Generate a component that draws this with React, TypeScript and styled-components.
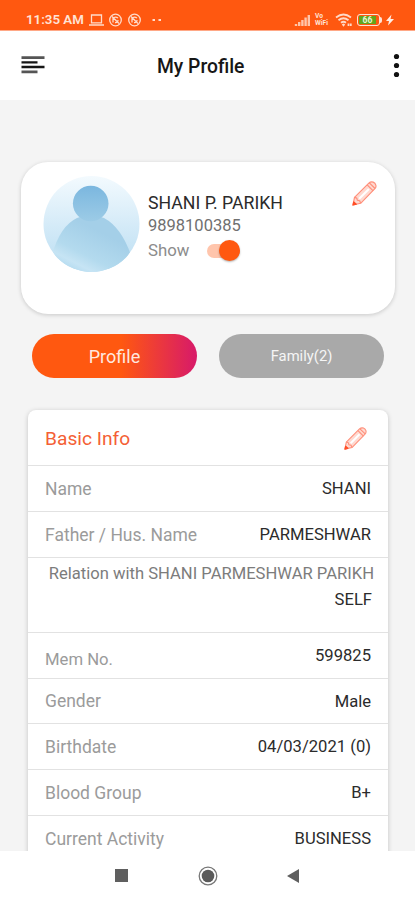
import React from 'react';
import styled, { createGlobalStyle } from 'styled-components';

const Global = createGlobalStyle`
  * { box-sizing: border-box; }
  body { margin: 0; font-family: Roboto, sans-serif; background: #f4f4f4; }
  svg { display: block; flex: none; }
`;

const Screen = styled.div`
  width: 415px;
  height: 900px;
  overflow: hidden;
  display: flex;
  flex-direction: column;
  background: #f4f4f4;
`;

const Text = styled.span<{ $size: number; $color?: string; $weight?: number }>`
  font-size: ${p => p.$size}px;
  line-height: 1.2;
  color: ${p => p.$color ?? '#2b2b2b'};
  font-weight: ${p => p.$weight ?? 400};
  white-space: nowrap;
`;

const StatusBar = styled.header`
  flex: none;
  height: 31px;
  padding: 8px 21px 0 26px;
  display: flex;
  justify-content: space-between;
  background: #ff5810;
  border-bottom: 1px solid #ffa886;
`;

const StatusGroup = styled.div<{ $gap: number }>`
  height: 23px;
  display: flex;
  align-items: center;
  gap: ${p => p.$gap}px;
`;

const TopBar = styled.div`
  flex: none;
  height: 69px;
  padding: 0 13px 0 21px;
  display: grid;
  grid-template-columns: 26px 1fr 12px;
  align-items: center;
  background: #fff;
`;

const Title = styled.h1`
  margin: 0;
  padding: 2px 0 0 110px;
  font-size: 19.3px;
  line-height: 24px;
  font-weight: 500;
  color: #161616;
  white-space: nowrap;
`;

const Content = styled.main`
  flex: 1;
  min-height: 0;
  overflow: hidden;
  padding: 62px 0 0;
`;

const ProfileCard = styled.section`
  margin: 0 20px 0 21px;
  height: 152px;
  padding: 14px 18px 0 22px;
  display: flex;
  align-items: flex-start;
  background: #fff;
  border-radius: 27px;
  box-shadow: 0 1px 4px rgba(0, 0, 0, 0.18);
`;

const Person = styled.div`
  flex: 1;
  padding: 17px 0 0 8px;
  display: flex;
  flex-direction: column;
  align-items: flex-start;
  gap: 2px;
`;

const ShowRow = styled.div`
  height: 25px;
  display: flex;
  align-items: center;
  gap: 18px;
`;

const Track = styled.div`
  width: 33px;
  height: 14px;
  border-radius: 7px;
  display: flex;
  align-items: center;
  justify-content: flex-end;
  background: #ffc5ac;
`;

const Thumb = styled.div`
  width: 21px;
  height: 21px;
  flex: none;
  border-radius: 50%;
  background: #ff5810;
  box-shadow: 0 1px 2px rgba(0, 0, 0, 0.3);
`;

const EditButton = styled.button<{ $top: number }>`
  padding: ${p => p.$top}px 0 0;
  border: 0;
  background: none;
`;

const Tabs = styled.nav`
  margin: 20px 31px 0 32px;
  display: grid;
  grid-template-columns: 165px 165px;
  justify-content: space-between;
`;

const Tab = styled.button<{ $active?: boolean }>`
  height: 44px;
  padding: 1px 0 0;
  border: 0;
  border-radius: 22px;
  display: flex;
  align-items: center;
  justify-content: center;
  font-family: inherit;
  background: ${p => (p.$active ? 'linear-gradient(90deg, #ff5810 0%, #ff5810 54%, #d91c66 98%)' : '#a9a9a9')};
`;

const InfoCard = styled.section`
  margin: 32px 27px 0 28px;
  background: #fff;
  border-radius: 8px;
  box-shadow: 0 1px 5px rgba(0, 0, 0, 0.2);
`;

const InfoHeader = styled.div`
  height: 55px;
  padding: 2px 21px 0 17px;
  display: flex;
  align-items: center;
  justify-content: space-between;
`;

const Row = styled.div<{ $height: number; $labelShift?: number }>`
  height: ${p => p.$height}px;
  padding: 1px 17px 0;
  border-top: 1px solid #e2e2e2;
  display: flex;
  align-items: center;
  justify-content: space-between;
  & > :first-child { padding-top: ${p => p.$labelShift ?? 0}px; }
`;

const RelationRow = styled.div`
  height: 75px;
  padding: 6px 14px 0 17px;
  border-top: 1px solid #e2e2e2;
  display: flex;
  flex-direction: column;
  align-items: flex-end;
  gap: 6px;
  & > :last-child { padding-right: 2px; }
`;

const SystemNav = styled.footer`
  flex: none;
  height: 49px;
  padding: 0 116px 0 115px;
  display: flex;
  align-items: center;
  justify-content: space-between;
  background: #fff;
`;

const Pencil = ({ size }: { size: number }) => (
  <svg width={size} height={size} viewBox="0 0 26 26" fill="none" stroke="#ff8f7a" strokeWidth="1.2" strokeLinejoin="round">
    <path d="M1 25 2.6 17 17.5 2.2Q19.5 .4 22 1.2Q24.2 2 24.8 4.2Q25.4 6.4 23.8 8L9 23.2Z" fill="#ffd9d0" />
    <path d="M2.6 17 5 17.8 5.5 20 8 20.6 9 23.2M15.8 4 22 10.2M18 2 24 7.8" />
    <path d="M7.5 18.4 17.6 8.2" stroke="#fff" strokeWidth="2.2" />
    <path d="M1 25 1.8 21.8 4.5 24Z" fill="#ff4d25" stroke="#ff4d25" />
  </svg>
);

const Avatar = () => (
  <svg width="97" height="97" viewBox="0 0 97 97">
    <defs>
      <linearGradient id="sky" x2="0" y2="1"><stop stopColor="#f3fafe" /><stop offset=".5" stopColor="#d5ebf8" /><stop offset="1" stopColor="#b9ddf2" /></linearGradient>
      <linearGradient id="head" x2="0" y2="1"><stop stopColor="#7bb7df" /><stop offset="1" stopColor="#9ccbe6" /></linearGradient>
      <linearGradient id="body" x1=".1" y1=".9" x2=".55" y2=".25"><stop stopColor="#aed8ee" /><stop offset=".22" stopColor="#c6e4f4" /><stop offset=".45" stopColor="#b3daee" /><stop offset="1" stopColor="#a4cfe8" /></linearGradient>
      <clipPath id="disc"><circle cx="48.5" cy="48" r="48" /></clipPath>
    </defs>
    <g clipPath="url(#disc)">
      <rect width="97" height="97" fill="url(#sky)" />
      <path d="M9 79Q17 50 34 42Q47 36 61 42Q78 51 88 79V97H9Z" fill="url(#body)" />
      <circle cx="47.7" cy="27.5" r="17.8" fill="url(#head)" />
    </g>
  </svg>
);

const Menu = () => (
  <svg width="26" height="20" viewBox="0 0 26 20" strokeWidth="2.3">
    <path d="M.5 1.7H23.5M.5 15.8H16.5" stroke="#555" strokeWidth="2.8" />
    <path d="M.5 6.4H16.5M.5 11H23.5" stroke="#161616" />
  </svg>
);

const More = () => (
  <svg width="12" height="28" viewBox="0 0 12 28" fill="#111">
    <circle cx="6.5" cy="4.5" r="2.6" /><circle cx="6.5" cy="13.5" r="2.6" /><circle cx="6.5" cy="22.5" r="2.6" />
  </svg>
);

const LeftIcons = () => (
  <svg width="76" height="16" viewBox="0 0 76 16" fill="none" stroke="#ffdccc" strokeWidth="1.3">
    <path d="M2.5 3H12.5V10.8H2.5ZM0 13H15" />
    <circle cx="26.5" cy="8" r="5.8" /><circle cx="45.5" cy="8" r="5.8" />
    <path d="M23 4.5 30 11.5M24 10.5V6.5Q26 4 29 6M26 10.5Q29 11 29 8M42 4.5 49 11.5M43 10.5V6.5Q45 4 48 6M45 10.5Q48 11 48 8" />
    <path d="M63.5 8H66M69.5 8H72" strokeWidth="2" />
  </svg>
);

const Signal = () => (
  <svg width="17" height="12" viewBox="0 0 17 12" stroke="#ffc5aa" strokeWidth="2.4">
    <path d="M2 12V10M5.2 12V8M8.4 12V6M11.6 12V3.5M14.8 12V1" />
  </svg>
);

const Network = styled.div`
  width: 16px;
  display: flex;
  flex-direction: column;
  font-size: 6.6px;
  line-height: 7px;
  font-weight: 700;
  color: #ffe3d6;
`;

const Wifi = () => (
  <svg width="18" height="14" viewBox="0 0 18 14" fill="none" stroke="#ffd9c7" strokeWidth="1.8">
    <path d="M1 4.5Q8.5-1.5 16 4.5M3.5 7.2Q8.5 3.2 13.5 7.2M6 9.8Q8.5 7.8 11 9.8" />
    <path d="M7.5 11 8.5 12.3 9.5 11M13.5 10.5V13M15.8 10.5V13" />
  </svg>
);

const Battery = styled.div`
  display: flex;
  align-items: center;
`;

const BatteryShell = styled.div`
  width: 23px;
  height: 12px;
  border: 1.5px solid #ffe3d6;
  border-radius: 3px;
  padding: 1px;
  display: flex;
`;

const BatteryTip = styled.div`
  width: 2px;
  height: 6px;
  background: #ffe3d6;
  border-radius: 0 2px 2px 0;
`;

const BatteryLevel = styled.div`
  width: 17px;
  display: flex;
  align-items: center;
  justify-content: center;
  background: #63a51b;
  font-size: 8.5px;
  line-height: 8px;
  font-weight: 700;
  color: #e9f5d8;
`;

const Bolt = () => (
  <svg width="8" height="12" viewBox="1 0 8 12"><path d="M6.5 .5 1 7H4L3 11.5 9 5H5.5Z" fill="#ffede5" /></svg>
);

const details = [
  { label: 'Gender', value: 'Male', height: 45 },
  { label: 'Birthdate', value: '04/03/2021 (0)', height: 46 },
  { label: 'Blood Group', value: 'B+', height: 46 },
  { label: 'Current Activity', value: 'BUSINESS', height: 46 },
];

const Label = ({ children, size = 17.5 }: { children: string; size?: number }) => (
  <Text $size={size} $color="#9b9b9b">{children}</Text>
);
const Value = ({ children }: { children: string }) => <Text $size={16.6}>{children}</Text>;

export default function App() {
  return (
    <Screen>
      <Global />
      <StatusBar>
        <StatusGroup $gap={5}>
          <Text $size={13.3} $weight={600} $color="#ffe3d6">11:35 AM</Text>
          <LeftIcons />
        </StatusGroup>
        <StatusGroup $gap={4}>
          <Signal />
          <Network><span>Vo</span><span>WiFi</span></Network>
          <Wifi />
          <Battery><BatteryShell><BatteryLevel>66</BatteryLevel></BatteryShell><BatteryTip /></Battery>
          <Bolt />
        </StatusGroup>
      </StatusBar>
      <TopBar><Menu /><Title>My Profile</Title><More /></TopBar>
      <Content>
        <ProfileCard>
          <Avatar />
          <Person>
            <Text $size={17.7}>SHANI P. PARIKH</Text>
            <Text $size={16.5} $color="#707070">9898100385</Text>
            <ShowRow>
              <Text $size={16.8} $color="#8c8c8c">Show</Text>
              <Track><Thumb /></Track>
            </ShowRow>
          </Person>
          <EditButton $top={5}><Pencil size={25} /></EditButton>
        </ProfileCard>
        <Tabs>
          <Tab $active><Text $size={18} $color="#ffe8df">Profile</Text></Tab>
          <Tab><Text $size={14.8} $color="#f5f5f5">Family(2)</Text></Tab>
        </Tabs>
        <InfoCard>
          <InfoHeader>
            <Text $size={19.2} $color="#f45f35">Basic Info</Text>
            <EditButton $top={0}><Pencil size={23} /></EditButton>
          </InfoHeader>
          <Row $height={46}><Label>Name</Label><Value>SHANI</Value></Row>
          <Row $height={46}><Label>Father / Hus. Name</Label><Value>PARMESHWAR</Value></Row>
          <RelationRow>
            <Text $size={16.6} $color="#7c7c7c">Relation with SHANI PARMESHWAR PARIKH</Text>
            <Value>SELF</Value>
          </RelationRow>
          <Row $height={46} $labelShift={8}><Label size={16.7}>Mem No.</Label><Value>599825</Value></Row>
          {details.map(d => (
            <Row key={d.label} $height={d.height}><Label>{d.label}</Label><Value>{d.value}</Value></Row>
          ))}
        </InfoCard>
      </Content>
      <SystemNav>
        <svg width="13" height="13"><rect width="13" height="13" fill="#5f5f5f" /></svg>
        <svg width="20" height="20" viewBox="0 0 20 20"><circle cx="10" cy="10" r="8.8" fill="none" stroke="#777" strokeWidth="1.3" /><circle cx="10" cy="10" r="6.3" fill="#5a5a5a" /></svg>
        <svg width="12" height="14"><path d="M0 7 12 0V14Z" fill="#5f5f5f" /></svg>
      </SystemNav>
    </Screen>
  );
}
